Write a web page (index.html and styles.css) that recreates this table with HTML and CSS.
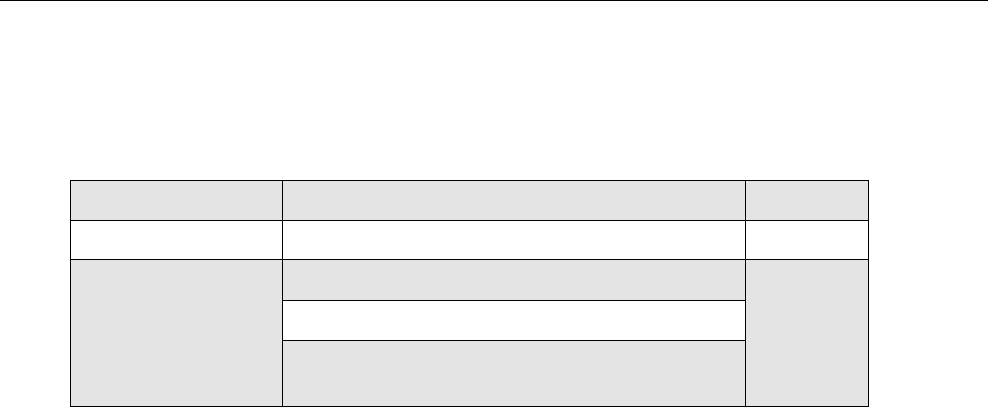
FILE: index.html
```html
<!DOCTYPE html>
<html>
<head>
<meta charset="utf-8">
<link rel="stylesheet" href="styles.css">
</head>
<body>
<div class="topline"></div>
<div class="wrap">
<table class="grid">
  <tr class="r-head">
    <td class="c1 gray"></td>
    <td class="c2 gray"></td>
    <td class="c3 gray"></td>
  </tr>
  <tr class="r-1">
    <td class="white"></td>
    <td class="white"></td>
    <td class="white"></td>
  </tr>
  <tr class="r-2a">
    <td class="gray" rowspan="3"></td>
    <td class="gray"></td>
    <td class="gray" rowspan="3"></td>
  </tr>
  <tr class="r-2b">
    <td class="white"></td>
  </tr>
  <tr class="r-2c">
    <td class="gray"></td>
  </tr>
</table>
</div>
</body>
</html>
```

FILE: styles.css
```css
html, body {
  margin: 0;
  padding: 0;
  background: #ffffff;
  font-family: "Liberation Sans", Arial, sans-serif;
}
.topline {
  width: 988px;
  height: 0;
  border-top: 1px solid #000;
}
.wrap {
  padding: 179px 0 0 70px;
}
.grid {
  border-collapse: collapse;
  border: 1px solid #000;
}
.grid td {
  border: 1px solid #000;
  padding: 0;
}
.c1 { width: 211px; }
.c2 { width: 462px; }
.c3 { width: 122px; }
.gray { background: #e4e4e4; }
.white { background: #ffffff; }
.r-head { height: 40px; }
.r-1 { height: 39px; }
.r-2a { height: 41px; }
.r-2b { height: 40px; }
.r-2c { height: 66px; }
```
